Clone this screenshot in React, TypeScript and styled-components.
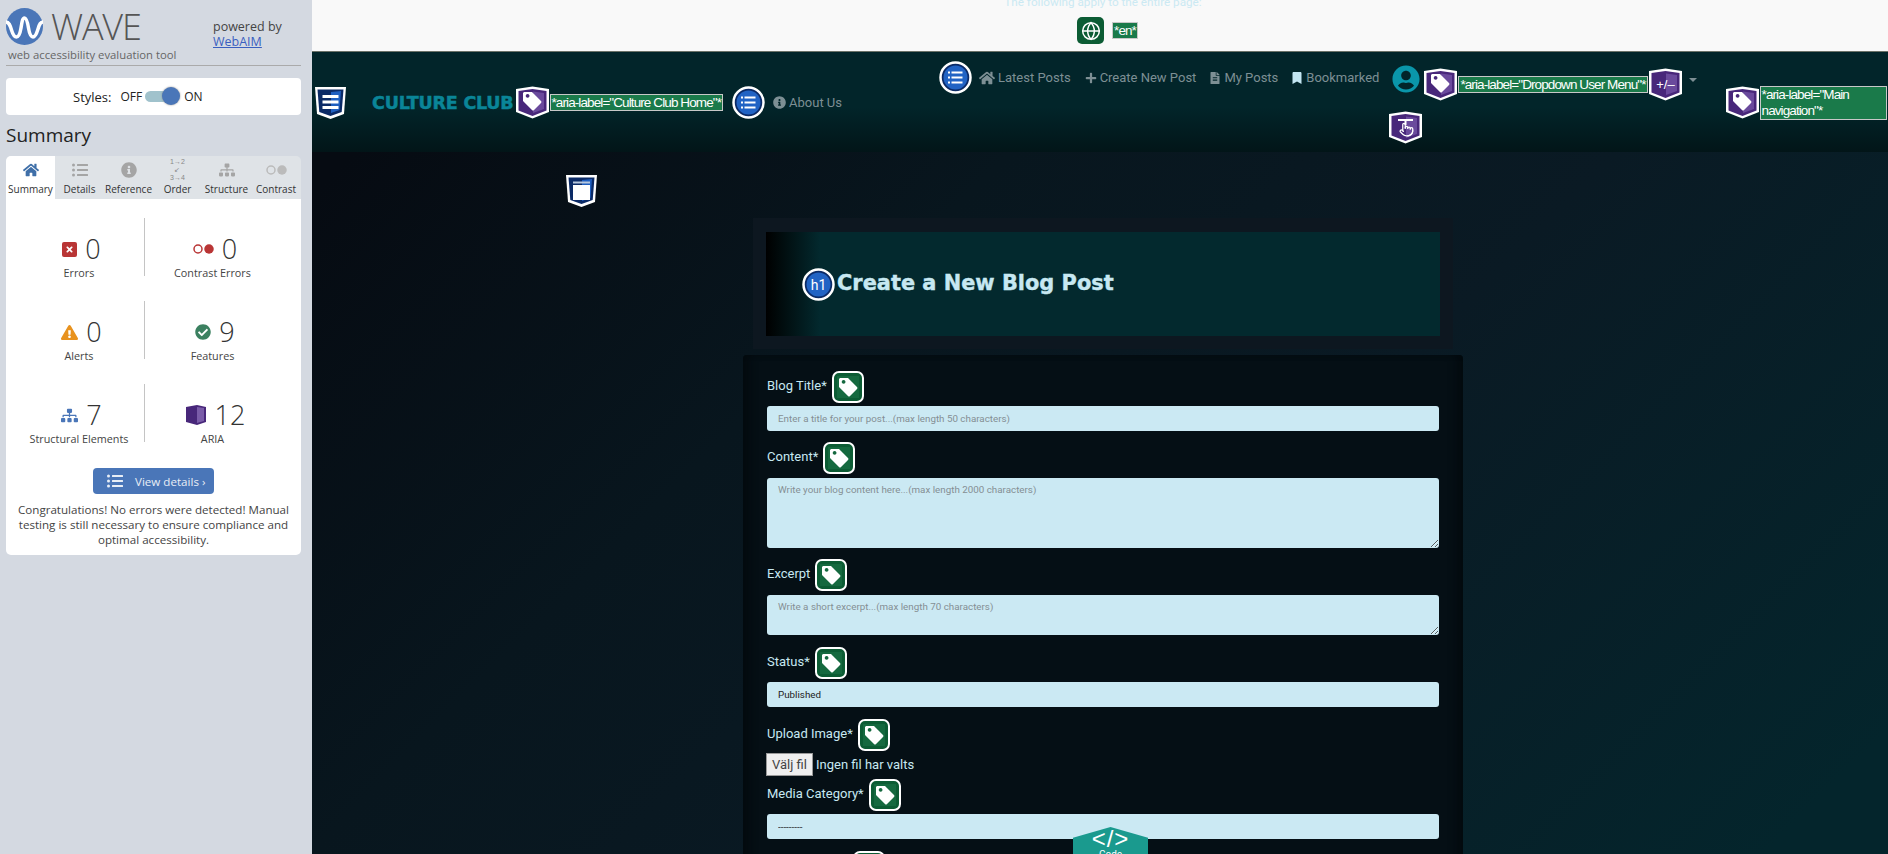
import React from "react";
import styled, { createGlobalStyle } from "styled-components";
import {
  FaHome,
  FaPlus,
  FaFileAlt,
  FaBookmark,
  FaInfoCircle,
  FaUserCircle,
  FaListUl,
  FaSitemap,
  FaTimes,
  FaExclamationTriangle,
  FaCheckCircle,
} from "react-icons/fa";
import { Globe, Pointer } from "lucide-react";

const GlobalStyle = createGlobalStyle`
  html, body {
    margin: 0;
    height: 100%;
    overflow: hidden;
    background: #06131b;
  }
  * {
    box-sizing: border-box;
  }
`;

const Page = styled.div`
  display: flex;
  width: 1888px;
  height: 854px;
  overflow: hidden;
`;

/* ---------- WAVE sidebar ---------- */

const Sidebar = styled.aside`
  width: 312px;
  flex-shrink: 0;
  background: #d4d9e1;
  padding: 8px 11px 0 6px;
  font-family: "Open Sans", sans-serif;
  color: #333;
`;

const LogoRow = styled.div`
  display: flex;
  height: 58px;
  border-bottom: 1px solid #aaa;
`;

const LogoMark = styled.div`
  width: 232px;
`;

const LogoTop = styled.div`
  display: flex;
  align-items: center;
  gap: 8px;
  height: 37px;
`;

const LogoWord = styled.span`
  font-size: 36px;
  font-weight: 300;
  line-height: 37px;
  color: #555;
  letter-spacing: -1.2px;
`;

const Tagline = styled.div`
  font-size: 11.3px;
  line-height: 16px;
  margin: 2px 0 0 2px;
  color: #666;
  white-space: nowrap;
`;

const PoweredBy = styled.div`
  font-size: 12.5px;
  line-height: 15px;
  margin: 11px 0 0 -25px;
  color: #444;
  white-space: nowrap;

  a {
    color: #3a5fc0;
    text-decoration: underline;
  }
`;

const StylesCard = styled.div`
  margin-top: 12px;
  height: 37px;
  background: #fff;
  border-radius: 4px;
  display: flex;
  align-items: center;
  padding-left: 67px;
  font-size: 12px;
  color: #222;
`;

const StylesLabel = styled.span`
  font-size: 13px;
  margin-right: 9px;
`;

const Switch = styled.span`
  position: relative;
  width: 31px;
  height: 11px;
  margin: 0 8px 0 3px;
  border-radius: 6px;
  background: #a0c2cc;

  &::after {
    content: "";
    position: absolute;
    right: -4px;
    top: -4px;
    width: 18px;
    height: 18px;
    border-radius: 50%;
    background: #4a76b8;
    box-shadow: 0 0 2px #888;
  }
`;

const SummaryTitle = styled.h2`
  margin: 8px 0 9px;
  font-size: 19px;
  line-height: 24px;
  font-weight: 400;
  color: #222;
`;

const Tabs = styled.div`
  display: flex;
  height: 43px;
  background: #dfe3e7;
  border-radius: 5px 5px 0 0;
`;

const Tab = styled.div<{ $active?: boolean; $w: number }>`
  width: ${(p) => p.$w}px;
  display: flex;
  flex-direction: column;
  align-items: center;
  justify-content: flex-end;
  padding-bottom: 3px;
  font-size: 10px;
  line-height: 14px;
  white-space: nowrap;
  color: #333;
  background: ${(p) => (p.$active ? "#fff" : "transparent")};
  border-radius: ${(p) => (p.$active ? "5px 0 0 0" : "0")};
`;

const TabIcon = styled.span<{ $active?: boolean }>`
  height: 24px;
  display: flex;
  align-items: center;
  justify-content: center;
  font-size: 16px;
  color: ${(p) => (p.$active ? "#3f6fa8" : "#a5a5a5")};
`;

const OrderGlyph = styled.span`
  font-size: 7px;
  line-height: 8px;
  text-align: center;
  color: #888;
  font-family: "Liberation Sans", sans-serif;
`;

const SummaryCard = styled.div`
  background: #fff;
  border-radius: 0 0 5px 5px;
  padding: 19px 0 8px;
`;

const StatGrid = styled.div`
  display: grid;
  grid-template-columns: 130px 136px;
  grid-auto-rows: 58px;
  row-gap: 25px;
  padding-left: 8px;
`;

const Stat = styled.div<{ $divided?: boolean }>`
  display: flex;
  flex-direction: column;
  align-items: center;
  padding-top: 14px;
  border-left: ${(p) => (p.$divided ? "1px solid #c4c4c4" : "none")};
`;

const StatTop = styled.div`
  height: 34px;
  display: flex;
  align-items: center;
  gap: 8px;
  margin-left: 5px;
`;

const StatNumber = styled.span`
  font-size: 27px;
  line-height: 34px;
  font-weight: 300;
  color: #333;
`;

const StatLabel = styled.div`
  font-size: 10.8px;
  line-height: 16px;
  margin-top: -1px;
  color: #444;
  white-space: nowrap;
`;

const ErrorBox = styled.span`
  width: 15px;
  height: 15px;
  border-radius: 2px;
  background: #b93535;
  color: #fff;
  font-size: 9px;
  display: flex;
  align-items: center;
  justify-content: center;
`;

const ViewDetails = styled.button`
  display: flex;
  align-items: center;
  gap: 12px;
  width: 121px;
  height: 26px;
  margin: 26px auto 0;
  padding: 0 0 0 14px;
  border: none;
  border-radius: 4px;
  background: #4a76b8;
  color: #e8eef6;
  font: 11.6px "Open Sans", sans-serif;
`;

const Congrats = styled.p`
  margin: 8px 8px 0;
  font-size: 11.6px;
  line-height: 15px;
  text-align: center;
  color: #444;
`;

/* ---------- page under test ---------- */

const Main = styled.main`
  position: relative;
  flex: 1;
  min-width: 0;
  display: flex;
  flex-direction: column;
  font-family: Roboto, sans-serif;
  background: linear-gradient(135deg, #060b12 8%, #08161e 35%, #0a1a24 60%, #04252c 95%);
`;

const WaveBanner = styled.div`
  height: 52px;
  flex-shrink: 0;
  background: #f9f9f9;
  border-bottom: 1px solid #6b7268;
  overflow: hidden;
  display: flex;
  flex-direction: column;
  align-items: center;
`;

const BannerNote = styled.div`
  margin: -6px 0 0 6px;
  height: 23px;
  font: 11.7px/16px Roboto, sans-serif;
  color: #cbe9f3;
`;

const BannerRow = styled.div`
  display: flex;
  align-items: center;
  gap: 8px;
  margin-left: 15px;
`;

const GlobeTile = styled.span`
  width: 27px;
  height: 27px;
  border-radius: 5px;
  background: #0c5c34;
  display: flex;
  align-items: center;
  justify-content: center;
  color: #fff;
`;

const WaveLabel = styled.span<{ $w?: number; $wrap?: boolean }>`
  display: inline-block;
  flex-shrink: 0;
  ${(p) => (p.$w ? `width: ${p.$w}px;` : "")}
  padding: 0 1px;
  background: #1a7a4a;
  border: 1px solid #c8c8c8;
  color: #fff;
  font: 13.5px/${(p) => (p.$wrap ? "16px" : "15px")} "Liberation Sans", sans-serif;
  letter-spacing: -0.9px;
  white-space: ${(p) => (p.$wrap ? "normal" : "nowrap")};
`;

const NavBar = styled.nav`
  height: 100px;
  flex-shrink: 0;
  display: flex;
  align-items: flex-start;
  padding-left: 1px;
  background: linear-gradient(180deg, #02252a 0%, #02252a 55%, #021518 100%);
`;

const BrandGroup = styled.div`
  display: flex;
  align-items: center;
  margin-top: 33px;
`;

const Brand = styled.span`
  margin: 0 1px 0 24px;
  font: 900 17.5px "DejaVu Sans", sans-serif;
  -webkit-text-stroke: 0.5px #0a8598;
  color: #0a8598;
  letter-spacing: -0.2px;
  white-space: nowrap;
`;

const CircleGap = styled.span`
  margin-left: 9px;
`;

const NavList = styled.div`
  display: flex;
  align-items: center;
  margin: 9px 0 0 97px;
`;

const NavItem = styled.a<{ $ml: number; $bright?: boolean }>`
  display: flex;
  align-items: center;
  gap: 3px;
  margin-left: ${(p) => p.$ml}px;
  font-size: 13px;
  color: #7d8f94;
  white-space: nowrap;

  svg {
    color: ${(p) => (p.$bright ? "#c3e6f2" : "#7d8f94")};
  }
`;

const UserMenu = styled.div`
  margin: 13px 0 0 9px;
  display: flex;
  flex-direction: column;
`;

const UserRow = styled.div`
  display: flex;
  align-items: center;
  color: #0a96aa;
`;

const UserGlyph = styled.span`
  display: flex;
  margin: 0 3px 10px 4px;
`;

const Caret = styled.span`
  width: 0;
  height: 0;
  margin: -4px 0 0 6px;
  border: 4px solid transparent;
  border-top: 4px solid #7d8f94;
`;

const TouchIcon = styled.div`
  margin-top: 7px;
  height: 34px;
`;

const MainNavLabel = styled.div`
  display: flex;
  align-items: center;
  margin: 33px 0 0 28px;
`;

const MainIcon = styled.div`
  position: absolute;
  left: 252px;
  top: 173px;
`;

const Content = styled.div`
  width: 720px;
  margin: 66px 0 0 431px;
`;

const HeadingOuter = styled.div`
  margin: 0 10px 6px;
  padding: 14px 13px 13px;
  background: #0d1720;
`;

const HeadingBox = styled.div`
  height: 104px;
  display: flex;
  align-items: center;
  padding-left: 36px;
  background: linear-gradient(90deg, #000 0%, #03292e 8%, #03292e 100%);
`;

const Title = styled.h1`
  margin: 0 0 2px 2px;
  font: 700 20.9px "DejaVu Sans", sans-serif;
  -webkit-text-stroke: 0.4px #c7e8f2;
  color: #c7e8f2;
  white-space: nowrap;
`;

const FormCard = styled.form`
  padding: 16px 24px 0;
  height: 520px;
  border-radius: 4px;
  background: #050f15;
  box-shadow: inset 10px 0 8px -4px #030a0e, inset -10px 0 8px -4px #030a0e;
`;

const LabelRow = styled.div`
  display: flex;
  align-items: center;
  gap: 5px;
  height: 32px;
  font-size: 13px;
  color: #c7e8f2;
`;

const LabelText = styled.span`
  margin-bottom: 3px;
`;

const fieldStyles = `
  display: block;
  width: 100%;
  border: none;
  outline: none;
  border-radius: 3px;
  background: #cbe9f3;
  font: 9.8px Roboto, sans-serif;
  padding: 0 11px;
`;

const TextInput = styled.input`
  ${fieldStyles}
  height: 25px;
  margin: 3px 0 11px;
  &::placeholder {
    color: #858f94;
    opacity: 1;
  }
`;

const TextArea = styled.textarea<{ $h: number; $mb: number }>`
  ${fieldStyles}
  height: ${(p) => p.$h}px;
  margin: 4px 0 ${(p) => p.$mb}px;
  padding-top: 6px;
  resize: vertical;
  &::placeholder {
    color: #858f94;
    opacity: 1;
  }
`;

const Select = styled.select`
  ${fieldStyles}
  appearance: none;
  height: 25px;
  margin: 3px 0 12px;
  color: #222;
`;

const FileRow = styled.div`
  display: flex;
  align-items: center;
  gap: 3px;
  height: 23px;
  margin: 2px 0 3px -1px;
  font-size: 13px;
  color: #c7e8f2;
`;

const FileButton = styled.button`
  width: 47px;
  height: 23px;
  padding: 0;
  border: 1px solid #999;
  background: #efefef;
  color: #444;
  font: 13px Roboto, sans-serif;
`;

const NextFieldTag = styled.div`
  margin-left: 86px;
`;

const CodeTab = styled.div`
  position: absolute;
  left: 761px;
  top: 827px;
  width: 75px;
  height: 60px;
  padding-top: 1px;
  background: #1a9a8e;
  clip-path: polygon(50% 0, 100% 18%, 100% 100%, 0 100%, 0 18%);
  color: #fff;
  text-align: center;
  font: 24px/22px "Liberation Sans", sans-serif;
  letter-spacing: 1px;
`;

const CodeCaption = styled.div`
  font: 10px/10px Roboto, sans-serif;
  letter-spacing: 0;
`;

/* ---------- drawn WAVE icons ---------- */

const Glyph = styled.svg`
  display: block;
  flex-shrink: 0;
`;

const tagPath =
  "M9 8h8l9 9q1 1 0 2l-7 7q-1 1-2 0l-9-9v-8zM12.6 10a1.9 1.9 0 1 0 .01 0z";

const WaveLogo = () => (
  <Glyph width="37" height="37" viewBox="0 0 37 37">
    <circle cx="18.5" cy="18.5" r="18.5" fill="#4a76b8" />
    <path
      d="M0 14c3 0 4 3 5.500 8s3 7 5 7 3.500-3 4.500-9 1.500-10 3.500-10 3 4 4 10 2.500 9 4.500 9 3.500-3 5-8 2.500-7 5.500-7"
      fill="none"
      stroke="#fff"
      strokeWidth="3.500"
    />
  </Glyph>
);

const ShieldBase = ({ dark, light, children }: { dark: string; light: string; children: React.ReactNode }) => (
  <Glyph width="35" height="35" viewBox="0 0 35 35">
    <path d="M2 2h31l-2 27-13.500 5-13.500-5z" fill="#fff" />
    <path d="M4.500 4.500h26l-1.800 22.500-11.200 4-11.200-4z" fill={dark} />
    <path d="M18 7l10-1-1.500 19-8.500 3z" fill={light} />
    {children}
  </Glyph>
);

const NavShield = () => (
  <ShieldBase dark="#0b2a66" light="#1f5fc0">
    <path d="M9.500 10h16v3h-16zM9.500 15.500h16v3h-16zM9.500 21h16v3h-16z" fill="#fff" />
  </ShieldBase>
);

const MainShield = () => (
  <ShieldBase dark="#0b2a66" light="#1f5fc0">
    <path d="M9 12h17v15H9z" fill="#fff" />
    <path d="M9 8.500h17v2H9z" fill="#b8c8de" />
  </ShieldBase>
);

const AriaShield = ({ children }: { children: React.ReactNode }) => (
  <Glyph width="35" height="35" viewBox="0 0 35 35">
    <path d="M1 4l16.500-2.500 16.500 2.500v23l-16.500 6.500-16.500-6.500z" fill="#fff" />
    <path d="M3.500 6l14-2 14 2v19.500l-14 5.500-14-5.500z" fill="#48277a" />
    <path d="M18 6.500l11 1.500v16l-11 4z" fill="#6a4a9c" />
    {children}
  </Glyph>
);

const TagShield = () => (
  <AriaShield>
    <path d={tagPath} transform="translate(0 -1)" fill="#fff" fillRule="evenodd" />
  </AriaShield>
);

const ExpandShield = () => (
  <AriaShield>
    <text x="17.5" y="22" textAnchor="middle" fontSize="13" fill="#fff" fontFamily="Liberation Sans, sans-serif">
      +/–
    </text>
  </AriaShield>
);

const TouchShield = () => (
  <AriaShield>
    <path d="M10 10h15M17.500 10v5" stroke="#fff" strokeWidth="2" fill="none" />
    <Pointer x="11" y="12" width="15" height="15" color="#fff" strokeWidth={2} />
  </AriaShield>
);

const GreenTag = () => (
  <Glyph width="32" height="32" viewBox="0 0 32 32">
    <rect x="1" y="1" width="30" height="30" rx="6" fill="#0c5c34" stroke="#fff" strokeWidth="2" />
    <rect x="5" y="5" width="22" height="22" fill="#15693f" />
    <path d={tagPath} transform="translate(-1 -1)" fill="#fff" fillRule="evenodd" />
  </Glyph>
);

const BlueCircle = ({ children }: { children: React.ReactNode }) => (
  <Glyph width="33" height="33" viewBox="0 0 33 33">
    <circle cx="16.500" cy="16.500" r="15" fill="#0b2a66" stroke="#fff" strokeWidth="2.500" />
    <circle cx="16.500" cy="16.500" r="12" fill="#2163c4" />
    {children}
  </Glyph>
);

const ListCircle = () => (
  <BlueCircle>
    <path
      d="M12.500 10.500h11v2h-11zM12.500 15.500h11v2h-11zM12.500 20.500h11v2h-11zM9 10.500h2v2H9zM9 15.500h2v2H9zM9 20.500h2v2H9z"
      fill="#fff"
    />
  </BlueCircle>
);

const H1Circle = () => (
  <BlueCircle>
    <text x="16.500" y="21.500" textAnchor="middle" fontSize="14" fill="#fff" fontFamily="Roboto, sans-serif">
      h1
    </text>
  </BlueCircle>
);

const ContrastDots = ({ color, size }: { color: string; size: number }) => (
  <Glyph width={size * 2.1} height={size} viewBox="0 0 42 20">
    <circle cx="10" cy="10" r="8" fill="none" stroke={color} strokeWidth="3" />
    <circle cx="32" cy="10" r="9.500" fill={color} />
  </Glyph>
);

const AriaBox = () => (
  <Glyph width="22" height="22" viewBox="0 0 22 22">
    <path d="M1 3l11-2 9 2v15l-9 3-11-3z" fill="#48277a" />
    <path d="M12 3l7 1v13l-7 2z" fill="#7a5ca8" />
  </Glyph>
);

const fields = [
  { name: "Blog Title*", kind: "input", hint: "Enter a title for your post...(max length 50 characters)" },
  { name: "Content*", kind: "area", h: 70, mb: 11, hint: "Write your blog content here...(max length 2000 characters)" },
  { name: "Excerpt", kind: "area", h: 40, mb: 12, hint: "Write a short excerpt...(max length 70 characters)" },
  { name: "Status*", kind: "select", value: "Published" },
  { name: "Upload Image*", kind: "file" },
  { name: "Media Category*", kind: "select", value: "---------" },
];

const stats = [
  { label: "Errors", value: "0", icon: <ErrorBox><FaTimes /></ErrorBox> },
  { label: "Contrast Errors", value: "0", icon: <ContrastDots color="#b93535" size={10} /> },
  { label: "Alerts", value: "0", icon: <FaExclamationTriangle color="#e8921e" size={17} /> },
  { label: "Features", value: "9", icon: <FaCheckCircle color="#3b8060" size={16} /> },
  { label: "Structural Elements", value: "7", icon: <FaSitemap color="#4a76b8" size={17} /> },
  { label: "ARIA", value: "12", icon: <AriaBox /> },
];

export default function App() {
  return (
    <Page>
      <GlobalStyle />
      <Sidebar>
        <LogoRow>
          <LogoMark>
            <LogoTop>
              <WaveLogo />
              <LogoWord>WAVE</LogoWord>
            </LogoTop>
            <Tagline>web accessibility evaluation tool</Tagline>
          </LogoMark>
          <PoweredBy>
            powered by
            <br />
            <a href="#webaim">WebAIM</a>
          </PoweredBy>
        </LogoRow>
        <StylesCard>
          <StylesLabel>Styles:</StylesLabel>
          OFF
          <Switch />
          ON
        </StylesCard>
        <SummaryTitle>Summary</SummaryTitle>
        <Tabs>
          <Tab $active $w={49}>
            <TabIcon $active><FaHome /></TabIcon>
            Summary
          </Tab>
          <Tab $w={49}>
            <TabIcon><FaListUl /></TabIcon>
            Details
          </Tab>
          <Tab $w={49}>
            <TabIcon><FaInfoCircle /></TabIcon>
            Reference
          </Tab>
          <Tab $w={49}>
            <TabIcon>
              <OrderGlyph>1→2<br />↙<br />3→4</OrderGlyph>
            </TabIcon>
            Order
          </Tab>
          <Tab $w={49}>
            <TabIcon><FaSitemap /></TabIcon>
            Structure
          </Tab>
          <Tab $w={50}>
            <TabIcon><ContrastDots color="#bbb" size={10} /></TabIcon>
            Contrast
          </Tab>
        </Tabs>
        <SummaryCard>
          <StatGrid>
            {stats.map((s, i) => (
              <Stat key={s.label} $divided={i % 2 === 1}>
                <StatTop>
                  {s.icon}
                  <StatNumber>{s.value}</StatNumber>
                </StatTop>
                <StatLabel>{s.label}</StatLabel>
              </Stat>
            ))}
          </StatGrid>
          <ViewDetails>
            <FaListUl size={16} />
            View details ›
          </ViewDetails>
          <Congrats>
            Congratulations! No errors were detected! Manual testing is still necessary to ensure compliance and optimal
            accessibility.
          </Congrats>
        </SummaryCard>
      </Sidebar>

      <Main>
        <WaveBanner>
          <BannerNote>The following apply to the entire page:</BannerNote>
          <BannerRow>
            <GlobeTile>
              <Globe size={20} strokeWidth={1.8} />
            </GlobeTile>
            <WaveLabel>*en*</WaveLabel>
          </BannerRow>
        </WaveBanner>

        <NavBar>
          <BrandGroup>
            <NavShield />
            <Brand>CULTURE CLUB</Brand>
            <TagShield />
            <WaveLabel>*aria-label="Culture Club Home"*</WaveLabel>
            <CircleGap>
              <ListCircle />
            </CircleGap>
            <NavItem $ml={8}>
              <FaInfoCircle size={13} />
              About Us
            </NavItem>
          </BrandGroup>

          <NavList>
            <ListCircle />
            <NavItem $ml={7}>
              <FaHome size={16} />
              Latest Posts
            </NavItem>
            <NavItem $ml={14}>
              <FaPlus size={12} />
              Create New Post
            </NavItem>
            <NavItem $ml={13}>
              <FaFileAlt size={12} />
              My Posts
            </NavItem>
            <NavItem $ml={13} $bright>
              <FaBookmark size={12} />
              Bookmarked
            </NavItem>
          </NavList>

          <UserMenu>
            <UserRow>
              <UserGlyph>
                <FaUserCircle size={28} />
              </UserGlyph>
              <TagShield />
              <WaveLabel>*aria-label="Dropdown User Menu"*</WaveLabel>
              <ExpandShield />
              <Caret />
            </UserRow>
            <TouchIcon>
              <TouchShield />
            </TouchIcon>
          </UserMenu>

          <MainNavLabel>
            <TagShield />
            <WaveLabel $w={127} $wrap>*aria-label="Main navigation"*</WaveLabel>
          </MainNavLabel>
        </NavBar>

        <MainIcon>
          <MainShield />
        </MainIcon>

        <Content>
          <HeadingOuter>
            <HeadingBox>
              <H1Circle />
              <Title>Create a New Blog Post</Title>
            </HeadingBox>
          </HeadingOuter>
          <FormCard>
            {fields.map((f) => (
              <div key={f.name}>
                <LabelRow>
                  <LabelText>{f.name}</LabelText>
                  <GreenTag />
                </LabelRow>
                {f.kind === "input" && <TextInput placeholder={f.hint} />}
                {f.kind === "area" && <TextArea $h={f.h ?? 40} $mb={f.mb ?? 12} placeholder={f.hint} />}
                {f.kind === "select" && (
                  <Select>
                    <option>{f.value}</option>
                  </Select>
                )}
                {f.kind === "file" && (
                  <FileRow>
                    <FileButton type="button">Välj fil</FileButton>
                    Ingen fil har valts
                  </FileRow>
                )}
              </div>
            ))}
            <NextFieldTag>
              <GreenTag />
            </NextFieldTag>
          </FormCard>
        </Content>

        <CodeTab>
          {"</>"}
          <CodeCaption>Code</CodeCaption>
        </CodeTab>
      </Main>
    </Page>
  );
}
